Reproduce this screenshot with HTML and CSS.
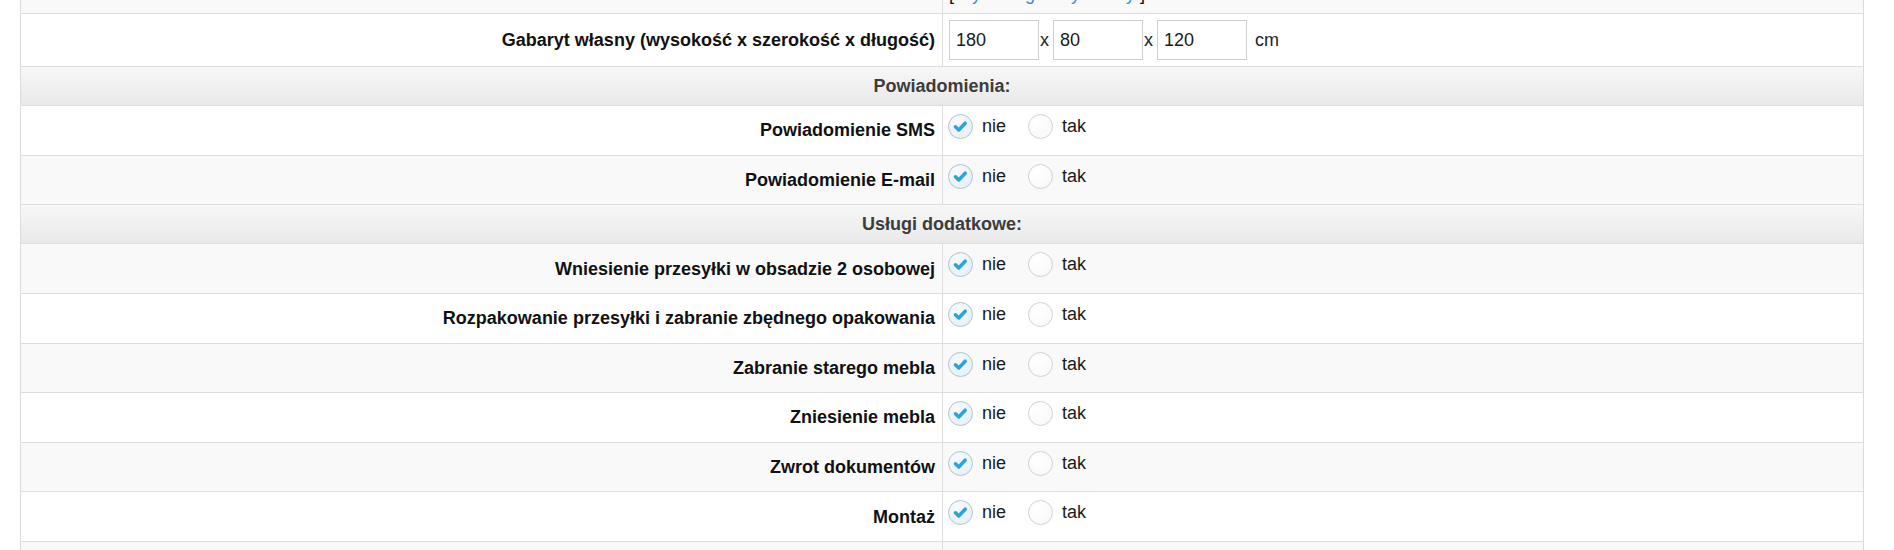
FILE: index.html
```html
<!DOCTYPE html>
<html lang="pl">
<head>
<meta charset="utf-8">
<title>Formularz</title>
<link rel="stylesheet" href="styles.css">
</head>
<body>
<div class="form">
  <div class="row alt partial">
    <div class="label"></div>
    <div class="value bottom"><span>[ <a class="link" href="#">wybierz gabaryt z listy</a> ]</span></div>
  </div>

  <div class="row tall">
    <div class="label">Gabaryt własny (wysokość x szerokość x długość)</div>
    <div class="value dims">
      <input class="dim" type="text" value="180">
      <span class="sep">x</span>
      <input class="dim" type="text" value="80">
      <span class="sep">x</span>
      <input class="dim" type="text" value="120">
      <span class="unit">cm</span>
    </div>
  </div>

  <div class="section">Powiadomienia:</div>

  <div class="row">
    <div class="label">Powiadomienie SMS</div>
    <div class="value choices">
      <span class="choice"><span class="radio checked"><svg viewBox="0 0 25 25"><path d="M7 12.8l3.6 3.5 7-7.4"/></svg></span>nie</span>
      <span class="choice"><span class="radio"></span>tak</span>
    </div>
  </div>
  <div class="row alt">
    <div class="label">Powiadomienie E-mail</div>
    <div class="value choices">
      <span class="choice"><span class="radio checked"><svg viewBox="0 0 25 25"><path d="M7 12.8l3.6 3.5 7-7.4"/></svg></span>nie</span>
      <span class="choice"><span class="radio"></span>tak</span>
    </div>
  </div>

  <div class="section">Usługi dodatkowe:</div>

  <div class="row alt">
    <div class="label">Wniesienie przesyłki w obsadzie 2 osobowej</div>
    <div class="value choices">
      <span class="choice"><span class="radio checked"><svg viewBox="0 0 25 25"><path d="M7 12.8l3.6 3.5 7-7.4"/></svg></span>nie</span>
      <span class="choice"><span class="radio"></span>tak</span>
    </div>
  </div>
  <div class="row">
    <div class="label">Rozpakowanie przesyłki i zabranie zbędnego opakowania</div>
    <div class="value choices">
      <span class="choice"><span class="radio checked"><svg viewBox="0 0 25 25"><path d="M7 12.8l3.6 3.5 7-7.4"/></svg></span>nie</span>
      <span class="choice"><span class="radio"></span>tak</span>
    </div>
  </div>
  <div class="row alt">
    <div class="label">Zabranie starego mebla</div>
    <div class="value choices">
      <span class="choice"><span class="radio checked"><svg viewBox="0 0 25 25"><path d="M7 12.8l3.6 3.5 7-7.4"/></svg></span>nie</span>
      <span class="choice"><span class="radio"></span>tak</span>
    </div>
  </div>
  <div class="row">
    <div class="label">Zniesienie mebla</div>
    <div class="value choices">
      <span class="choice"><span class="radio checked"><svg viewBox="0 0 25 25"><path d="M7 12.8l3.6 3.5 7-7.4"/></svg></span>nie</span>
      <span class="choice"><span class="radio"></span>tak</span>
    </div>
  </div>
  <div class="row alt">
    <div class="label">Zwrot dokumentów</div>
    <div class="value choices">
      <span class="choice"><span class="radio checked"><svg viewBox="0 0 25 25"><path d="M7 12.8l3.6 3.5 7-7.4"/></svg></span>nie</span>
      <span class="choice"><span class="radio"></span>tak</span>
    </div>
  </div>
  <div class="row">
    <div class="label">Montaż</div>
    <div class="value choices">
      <span class="choice"><span class="radio checked"><svg viewBox="0 0 25 25"><path d="M7 12.8l3.6 3.5 7-7.4"/></svg></span>nie</span>
      <span class="choice"><span class="radio"></span>tak</span>
    </div>
  </div>
  <div class="row alt">
    <div class="label"></div>
    <div class="value choices"></div>
  </div>
</div>
</body>
</html>
```

FILE: styles.css
```css
html, body {
  margin: 0;
  padding: 0;
  background: #ffffff;
  overflow: hidden;
}

body {
  font-family: "Liberation Sans", Arial, Helvetica, sans-serif;
  font-size: 18px;
  color: #111111;
}

.form {
  width: 1844px;
  margin-left: 20px;
  margin-top: -35.6px;
  box-sizing: border-box;
  border-left: 1px solid #dcdcdc;
  border-right: 1px solid #dcdcdc;
}

.row {
  display: grid;
  grid-template-columns: 1fr 1fr;
  height: 49.625px;
  box-sizing: border-box;
  border-bottom: 1px solid #dedede;
  background: #ffffff;
}

.row.alt {
  background: #f9f9f9;
}

.row.tall {
  height: 53px;
}

.label {
  display: flex;
  align-items: center;
  justify-content: flex-end;
  padding-right: 7px;
  font-weight: bold;
  line-height: 21px;
  padding-top: 1px;
  white-space: nowrap;
}

.value {
  border-left: 1px solid #dedede;
  padding-left: 5px;
  display: flex;
  min-width: 0;
}

.value.bottom {
  align-items: flex-end;
  padding-left: 6px;
  padding-bottom: 8px;
  line-height: 21px;
}

.link {
  color: #3a8ad0;
  text-decoration: none;
}

.dims {
  align-items: center;
  padding-left: 6px;
}

.dim {
  width: 90px;
  height: 40px;
  box-sizing: border-box;
  border: 1px solid #cfcfcf;
  border-radius: 0;
  background: #ffffff;
  padding: 0 0 0 6px;
  margin: 0;
  font-family: "Liberation Sans", Arial, Helvetica, sans-serif;
  font-size: 18px;
  color: #1a1a1a;
  outline: none;
}

.sep {
  width: 14px;
  padding-left: 1px;
  box-sizing: border-box;
  text-align: left;
  color: #222222;
}

.unit {
  margin-left: 8px;
  color: #222222;
}

.section {
  height: 39px;
  box-sizing: border-box;
  border-bottom: 1px solid #dedede;
  background: linear-gradient(to bottom, #f7f7f7 0%, #e9e9e9 100%);
  text-align: center;
  font-weight: bold;
  line-height: 38px;
  color: #3c3c3c;
}

.choices {
  align-items: flex-start;
  padding-top: 8px;
}

.choice {
  display: flex;
  align-items: center;
  gap: 9px;
  margin-right: 22px;
  line-height: 25px;
  color: #1a1a1a;
}

.radio {
  width: 25px;
  height: 25px;
  box-sizing: border-box;
  border-radius: 50%;
  border: 1px solid #d2d2d2;
  background: radial-gradient(circle at 35% 30%, #ffffff 0%, #f7f7f7 100%);
  flex: none;
  display: block;
}

.radio.checked {
  border-color: #b3c3d0;
  background: radial-gradient(circle at 35% 30%, #f5fafd 0%, #e4eef6 100%);
}

.radio svg {
  display: block;
  width: 23px;
  height: 23px;
}

.radio svg path {
  fill: none;
  stroke: #2aa4dc;
  stroke-width: 3.8;
  stroke-linecap: round;
  stroke-linejoin: round;
}
```
